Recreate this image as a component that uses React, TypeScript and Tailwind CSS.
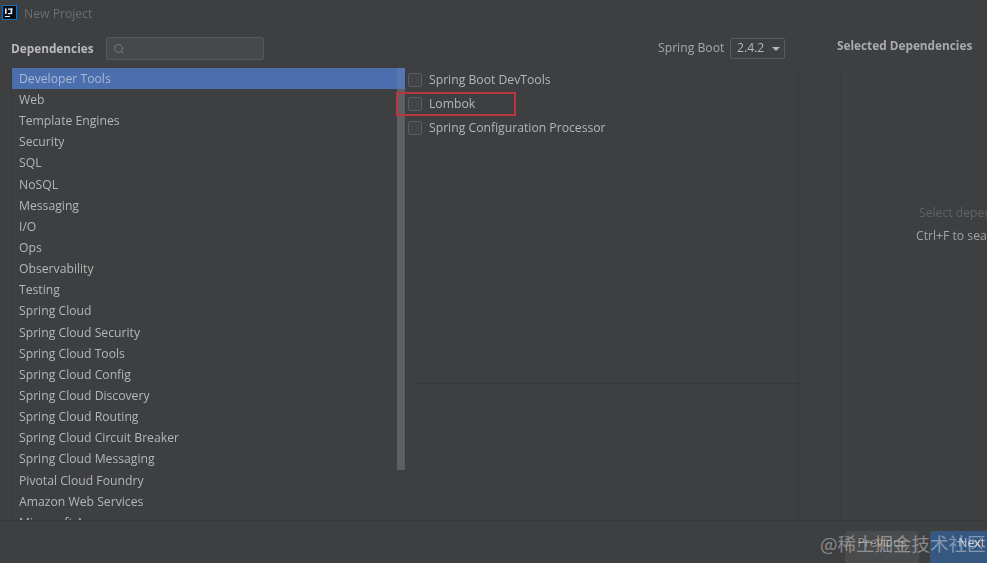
import { Search } from "lucide-react";

const categories = [
  "Developer Tools",
  "Web",
  "Template Engines",
  "Security",
  "SQL",
  "NoSQL",
  "Messaging",
  "I/O",
  "Ops",
  "Observability",
  "Testing",
  "Spring Cloud",
  "Spring Cloud Security",
  "Spring Cloud Tools",
  "Spring Cloud Config",
  "Spring Cloud Discovery",
  "Spring Cloud Routing",
  "Spring Cloud Circuit Breaker",
  "Spring Cloud Messaging",
  "Pivotal Cloud Foundry",
  "Amazon Web Services",
  "Microsoft Azure",
];

const deps = ["Spring Boot DevTools", "Lombok", "Spring Configuration Processor"];

const App = () => {
  return (
    <div className="relative h-[563px] w-[987px] overflow-hidden">
      <main className="flex h-[563px] w-[987px] flex-col overflow-hidden bg-[#3e3f41] font-['Open_Sans',sans-serif] text-[12.2px] text-[#b4b6b7] blur-[0.4px]">
        {/* title bar */}
        <div className="flex h-[37px] shrink-0 items-start pl-[2px] pt-[5px]">
          <svg width="15" height="15" viewBox="0 0 15 15" className="shrink-0">
            <rect width="15" height="15" fill="#1c6fb5" />
            <rect x="1" y="1" width="13" height="13" fill="#0b0e14" />
            <rect x="3" y="3.5" width="1.6" height="5.5" fill="#e8edf2" />
            <rect x="6" y="3.5" width="4.5" height="1.3" fill="#e8edf2" />
            <rect x="8.6" y="3.5" width="1.6" height="5.5" fill="#e8edf2" />
            <rect x="6" y="8" width="3" height="1.2" fill="#e8edf2" />
            <rect x="3" y="11" width="5" height="1" fill="#e8edf2" />
          </svg>
          <span className="ml-[7px] text-[#6c6e70]">New Project</span>
        </div>

        {/* toolbar */}
        <div className="flex h-[31px] shrink-0 items-start">
          <span className="ml-[11px] mt-[3px] w-[82px] whitespace-nowrap text-[11.8px] font-bold text-[#b9babb]">Dependencies</span>
          <div className="ml-[13px] flex h-[23px] w-[158px] items-center rounded-[2px] border border-[#565a5a] bg-[#45494a] pl-[6px]">
            <Search size={12} className="text-[#77797b]" />
          </div>
          <span className="ml-[394px] mt-[2px] w-[67px] whitespace-nowrap text-[#a5a7a8]">Spring Boot</span>
          <div className="ml-[5px] mt-[1px] flex h-[21px] w-[55px] items-center rounded-[2px] border border-[#58595b] pl-[6px] text-[#b4b6b7]">
            2.4.2
            <span className="ml-[8px] h-0 w-0 border-x-[4px] border-t-[4px] border-x-transparent border-t-[#b4b6b7]" />
          </div>
          <span className="ml-[52px] whitespace-nowrap text-[11.8px] font-bold text-[#a9aaab]">Selected Dependencies</span>
        </div>

        {/* panels */}
        <div className="flex h-[452px] shrink-0 pl-[11px]">
          <div className="relative h-full w-[395px] shrink-0 overflow-hidden border-x border-[#3a3b3d]">
            {categories.map((name, i) => (
              <div
                key={name}
                className={
                  i === 0
                    ? "flex h-[21.15px] items-center bg-[#4b6eaf] pl-[7px] pt-[1px] text-[#a9b9d6]"
                    : "flex h-[21.15px] items-center pl-[7px] pt-[1px]"
                }
              >
                {name}
              </div>
            ))}
            <div className="absolute right-0 top-0 h-[402px] w-[8px] bg-[#5d5f61]" />
            <div className="absolute right-0 top-0 h-[21px] w-[8px] bg-[#5b76ab]" />
          </div>

          <div className="flex w-[393px] shrink-0 flex-col border-r border-[#37383a]">
            <div className="ml-[10px] h-[316px] border-b border-[#37383a]">
              <div className="-ml-[8px]">
                {deps.map((name) => (
                  <div key={name} className="flex h-[24px] items-center gap-[7px]">
                    <span className="h-[14px] w-[14px] rounded-[2px] border border-[#5a5c5e] bg-[#434546]" />
                    {name}
                  </div>
                ))}
              </div>
            </div>
          </div>

          <div className="ml-[41px] flex w-[260px] shrink-0 flex-col border-l border-[#3a3b3d] pl-[75px] pt-[136px]">
            <span className="whitespace-nowrap pl-[3px] text-[#5f6163]">Select dependencies</span>
            <span className="mt-[5px] whitespace-nowrap text-[#a0a2a3]">Ctrl+F to search</span>
          </div>
        </div>

        {/* footer */}
        <div className="flex h-[43px] shrink-0 items-start justify-end border-t border-[#37383a] pt-[10px]">
          <button className="mr-[11px] h-[40px] w-[74px] shrink-0 rounded-[3px] bg-[#494b4d] pb-[15px] text-[#8f9193]">Previous</button>
          <button className="-mr-[30px] h-[40px] w-[87px] shrink-0 rounded-[3px] bg-[#365880] pb-[15px] pr-[32px] text-right text-[#c5cbd3]">Next</button>
        </div>
      </main>

      {/* watermark */}
      <span className="absolute left-[820px] top-[530px] whitespace-nowrap font-['Noto_Sans_CJK_SC',sans-serif] text-[18.5px] leading-[27px] text-white/40">
        @稀土掘金技术社区
      </span>

      {/* red annotation */}
      <div className="absolute left-[396px] top-[92px] h-[24px] w-[120px] border-2 border-[#b8373f]" />
    </div>
  );
};

export default App;
